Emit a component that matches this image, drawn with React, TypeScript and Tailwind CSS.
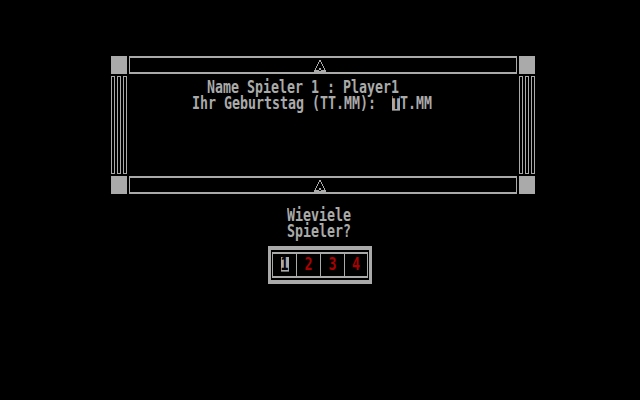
import React from "react";

function Tri() {
  const px: [number, number, number, number, string][] = [];
  for (let i = 0; i < 5; i++) {
    const y = i * 2;
    const l = 5 - i;
    const r = 6 + i;
    if (l === r - 1) {
      px.push([l, y, 2, 2, "#aaaaaa"]);
    } else {
      px.push([l, y, 1, 2, "#aaaaaa"]);
      px.push([r, y, 1, 2, "#aaaaaa"]);
    }
  }
  px.push([5, 8, 2, 2, "#aaaaaa"]);
  px.push([0, 10, 12, 2, "#aaaaaa"]);
  px.push([5, 10, 2, 1, "#000000"]);
  return (
    <svg width="12" height="12" viewBox="0 0 12 12" shapeRendering="crispEdges">
      {px.map(([x, y, w, h, c], i) => (
        <rect key={i} x={x} y={y} width={w} height={h} fill={c} />
      ))}
    </svg>
  );
}

function EdgeRow() {
  return (
    <div className="flex h-[18px] gap-[2px]">
      <div className="w-[16px] bg-[#aaaaaa]" />
      <div className="w-[388px] border-x border-y-2 border-[#aaaaaa] pl-[184px] pt-[2px]">
        <Tri />
      </div>
      <div className="w-[16px] bg-[#aaaaaa]" />
    </div>
  );
}

function Pillars() {
  return (
    <div className="flex gap-[2px]">
      <div className="w-[4px] border border-[#aaaaaa]" />
      <div className="w-[4px] border border-[#aaaaaa]" />
      <div className="w-[4px] border border-[#aaaaaa]" />
    </div>
  );
}

function Line({ children, className = "" }: { children: React.ReactNode; className?: string }) {
  return (
    <div className={"h-[16px] leading-[12px] whitespace-pre " + className}>
      <span className="inline-block h-[12px] leading-[12px] scale-y-[1.33] origin-top">{children}</span>
    </div>
  );
}

function Inv({ children }: { children: React.ReactNode }) {
  return (
    <span className="inline-block h-[11px] leading-[11px] bg-[#aaaaaa] text-black">{children}</span>
  );
}

export default function App() {
  return (
    <div className="w-[640px] h-[400px] bg-black overflow-hidden font-['DejaVu_Sans_Mono',monospace] font-bold text-[13.29px] text-[#aaaaaa]">
      <div className="pt-[56px] pl-[111px]">
        <div className="w-[424px] flex flex-col gap-[2px]">
          <EdgeRow />
          <div className="h-[98px] flex gap-[2px]">
            <Pillars />
            <div className="w-[388px] pt-[4px]">
              <Line className="pl-[78px]">Name Spieler 1 : Player1</Line>
              <Line className="pl-[63px]">
                Ihr Geburtstag (TT.MM):{"  "}
                <Inv>T</Inv>T.MM
              </Line>
            </div>
            <Pillars />
          </div>
          <EdgeRow />
        </div>
      </div>
      <div className="mt-[14px] pl-[287px]">
        <Line>Wieviele</Line>
        <Line>Spieler?</Line>
      </div>
      <div className="ml-[268px] mt-[6px] w-[104px] bg-[#aaaaaa] px-[3px] py-[4px]">
        <div className="bg-black px-[1px] py-[2px]">
          <div className="bg-[#aaaaaa] px-[1px] py-[2px]">
            <div className="flex gap-[1px] h-[22px]">
              <div className="w-[23px] bg-black flex items-center justify-center">
                <Line>
                  <Inv>1</Inv>
                </Line>
              </div>
              <div className="w-[23px] bg-black flex items-center justify-center text-[#aa0000]">
                <Line>2</Line>
              </div>
              <div className="w-[23px] bg-black flex items-center justify-center text-[#aa0000]">
                <Line>3</Line>
              </div>
              <div className="w-[22px] bg-black flex items-center justify-center text-[#aa0000]">
                <Line>4</Line>
              </div>
            </div>
          </div>
        </div>
      </div>
    </div>
  );
}
